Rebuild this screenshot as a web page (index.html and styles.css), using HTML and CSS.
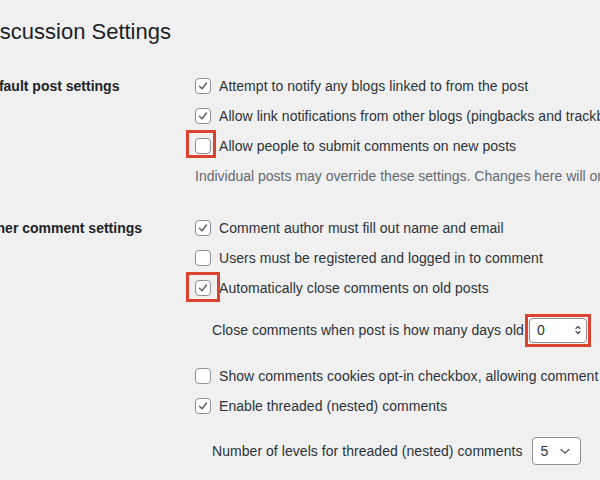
FILE: index.html
```
<html>
    <head>
        <link rel="stylesheet" href="styles.css">
    </head>
    <body>
        <div class="page">
            <h1>Discussion Settings</h1>

            <div class="setting">
                <div class="label">Default post settings</div>
                <div class="fields">
                    <div class="row">
                        <span class="box checked"><svg viewBox="0 0 16 16"><path d="M4 8.3 L6.9 11.2 L12 4.6"/></svg></span>
                        <span class="text">Attempt to notify any blogs linked to from the post</span>
                    </div>
                    <div class="row">
                        <span class="box checked"><svg viewBox="0 0 16 16"><path d="M4 8.3 L6.9 11.2 L12 4.6"/></svg></span>
                        <span class="text">Allow link notifications from other blogs (pingbacks and trackbacks) on new posts</span>
                    </div>
                    <div class="row">
                        <span class="box marked"></span>
                        <span class="text">Allow people to submit comments on new posts</span>
                    </div>
                    <p class="desc">Individual posts may override these settings. Changes here will only be applied to new posts.</p>
                </div>
            </div>

            <div class="setting second">
                <div class="label">Other comment settings</div>
                <div class="fields">
                    <div class="row">
                        <span class="box checked"><svg viewBox="0 0 16 16"><path d="M4 8.3 L6.9 11.2 L12 4.6"/></svg></span>
                        <span class="text">Comment author must fill out name and email</span>
                    </div>
                    <div class="row">
                        <span class="box"></span>
                        <span class="text">Users must be registered and logged in to comment</span>
                    </div>
                    <div class="row">
                        <span class="box checked marked wide"><svg viewBox="0 0 16 16"><path d="M4 8.3 L6.9 11.2 L12 4.6"/></svg></span>
                        <span class="text">Automatically close comments on old posts</span>
                    </div>
                    <div class="row sub close-row">
                        <span class="text">Close comments when post is how many days old</span>
                        <span class="number">
                            <span>0</span>
                            <svg class="spin" viewBox="0 0 8 12"><path d="M2 4.5 L4 2.5 L6 4.5 M2 7.5 L4 9.5 L6 7.5"/></svg>
                        </span>
                    </div>
                    <div class="row cookies">
                        <span class="box"></span>
                        <span class="text">Show comments cookies opt-in checkbox, allowing comment author cookies to be set</span>
                    </div>
                    <div class="row">
                        <span class="box checked"><svg viewBox="0 0 16 16"><path d="M4 8.3 L6.9 11.2 L12 4.6"/></svg></span>
                        <span class="text">Enable threaded (nested) comments</span>
                    </div>
                    <div class="row sub levels">
                        <span class="text">Number of levels for threaded (nested) comments</span>
                        <span class="select">
                            <span>5</span>
                            <svg class="chev" viewBox="0 0 12 8"><path d="M2 2.5 L6 6 L10 2.5"/></svg>
                        </span>
                    </div>
                </div>
            </div>
        </div>
    </body>
</html>
```

FILE: styles.css
```
html, body {
    overflow: hidden;
}
body {
    margin: 0;
    background: #f0f0f1;
    color: #1d2327;
    font-family: "Liberation Sans", Arial, sans-serif;
    font-size: 14px;
}
.page {
    margin-left: -19px;
    padding-top: 17px;
    white-space: nowrap;
}
h1 {
    margin: 0 0 0 -2px;
    font-size: 22px;
    font-weight: 400;
    line-height: 30px;
    color: #1d2327;
}
.setting {
    display: grid;
    grid-template-columns: 214px 1fr;
    margin-top: 24px;
}
.setting.second {
    margin-top: 22px;
}
.label {
    font-weight: 600;
    line-height: 30px;
}
.row {
    display: flex;
    align-items: center;
    height: 30px;
    color: #2c3338;
    letter-spacing: 0.05px;
}
.box {
    position: relative;
    flex: none;
    width: 14px;
    height: 14px;
    border: 1px solid #8c8f94;
    border-radius: 4px;
    background: #fff;
    margin-right: 8px;
}
.box svg {
    display: block;
    width: 14px;
    height: 14px;
}
.box svg path {
    fill: none;
    stroke: #646970;
    stroke-width: 1.8;
    stroke-linecap: round;
    stroke-linejoin: round;
}
.box.marked::after {
    content: "";
    position: absolute;
    left: -10px;
    top: -9px;
    width: 24px;
    height: 22px;
    border: 3px solid #d9432f;
}
.box.marked.wide::after {
    width: 28px;
    height: 24px;
    top: -9px;
}
.desc {
    margin: 0;
    height: 30px;
    line-height: 30px;
    color: #646970;
}
.sub {
    padding-left: 17px;
}
.close-row {
    margin-top: 12px;
}
.cookies {
    margin-top: 16px;
}
.levels {
    margin-top: 15px;
}
.number {
    position: relative;
    display: flex;
    align-items: center;
    justify-content: space-between;
    box-sizing: border-box;
    width: 58px;
    height: 25px;
    margin-left: 5px;
    padding: 0 4px 0 7px;
    background: #fff;
    border: 1px solid #8c8f94;
    border-radius: 4px;
}
.number::after {
    content: "";
    position: absolute;
    left: -5px;
    top: -5px;
    right: -5px;
    bottom: -5px;
    border: 3px solid #d9432f;
}
.spin {
    width: 8px;
    height: 12px;
}
.spin path, .chev path {
    fill: none;
    stroke: #50575e;
    stroke-width: 1.3;
    stroke-linecap: round;
    stroke-linejoin: round;
}
.select {
    display: flex;
    align-items: center;
    justify-content: space-between;
    box-sizing: border-box;
    width: 49px;
    height: 28px;
    margin-left: 9px;
    padding: 0 9px 0 8px;
    background: #fff;
    border: 1px solid #8c8f94;
    border-radius: 4px;
}
.chev {
    width: 12px;
    height: 8px;
}
```
